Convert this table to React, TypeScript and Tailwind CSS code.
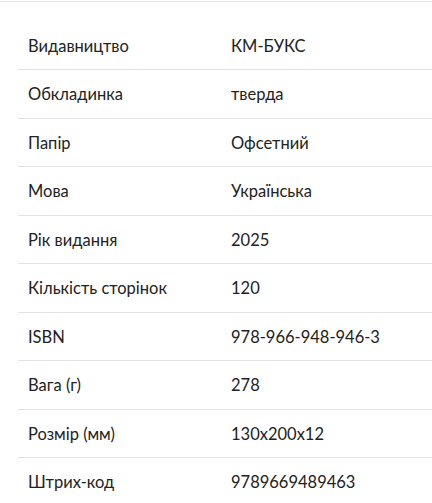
import React from 'react';

const specs: [string, string][] = [
  ['Видавництво', 'КМ-БУКС'],
  ['Обкладинка', 'тверда'],
  ['Папір', 'Офсетний'],
  ['Мова', 'Українська'],
  ['Рік видання', '2025'],
  ['Кількість сторінок', '120'],
  ['ISBN', '978-966-948-946-3'],
  ['Вага (г)', '278'],
  ['Розмір (мм)', '130x200x12'],
  ['Штрих-код', '9789669489463'],
];

export default function App() {
  return (
    <div className="min-h-screen bg-white" style={{ fontFamily: 'Lato, "Noto Sans", sans-serif' }}>
      <div className="mt-px border-t border-[#e6e5ec] pt-[19.5px] pl-[18px]">
        {specs.map(([label, value], i) => (
          <div
            key={label}
            className={`flex pt-[13px] pb-[11px] text-[16.5px] leading-[23.5px] text-[#222] ${
              i < specs.length - 1 ? 'border-b border-[#e2e2e2]' : ''
            }`}
          >
            <div className="w-[213px] shrink-0 pl-[10px]">{label}</div>
            <div>{value}</div>
          </div>
        ))}
      </div>
    </div>
  );
}
